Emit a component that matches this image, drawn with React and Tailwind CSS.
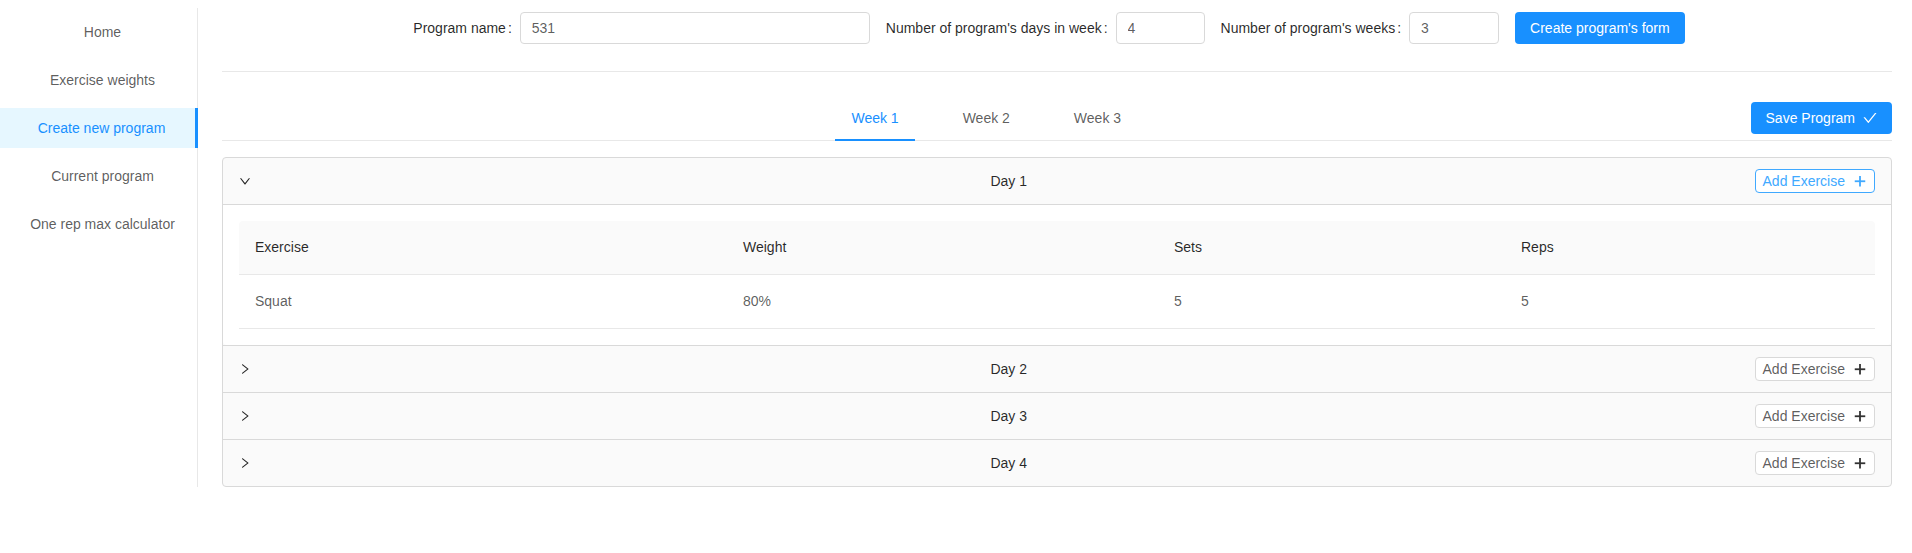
import { useState } from 'react';

const menuItems = ['Home', 'Exercise weights', 'Create new program', 'Current program', 'One rep max calculator'];
const weeks = ['Week 1', 'Week 2', 'Week 3'];
const days = ['Day 1', 'Day 2', 'Day 3', 'Day 4'];

function RightIcon({ className }) {
  return (
    <svg viewBox="64 64 896 896" className={className} fill="currentColor">
      <path d="M765.7 486.8L314.9 134.7A7.97 7.97 0 00302 141v77.3c0 4.9 2.3 9.6 6.1 12.6l360 281.1-360 281.1c-3.9 3-6.1 7.7-6.1 12.6V883c0 6.7 7.7 10.4 12.9 6.3l450.8-352.1a31.96 31.96 0 000-50.4z" />
    </svg>
  );
}

function PlusIcon({ className }) {
  return (
    <svg viewBox="0 0 14 14" className={className} fill="currentColor">
      <rect x="6.1" y="2" width="1.8" height="10.5" />
      <rect x="1.75" y="6.35" width="10.5" height="1.8" />
    </svg>
  );
}

function CheckIcon({ className }) {
  return (
    <svg viewBox="64 64 896 896" className={className} fill="currentColor">
      <path d="M912 190h-69.9c-9.8 0-19.1 4.5-25.1 12.2L404.7 724.5 207 474a32 32 0 00-25.1-12.2H112c-6.7 0-10.4 7.7-6.3 12.9l273.9 347c12.8 16.2 37.4 16.2 50.3 0l488.4-618.9c4.1-5.1.4-12.8-6.3-12.8z" />
    </svg>
  );
}

function FormItem({ label, children }) {
  return (
    <div className="flex items-center mr-4">
      <label className="text-[rgba(0,0,0,0.85)] whitespace-nowrap">
        {label}
        <span className="ml-[2px] mr-2">:</span>
      </label>
      {children}
    </div>
  );
}

function Field({ value, width }) {
  return (
    <input
      defaultValue={value}
      className={`${width} h-8 border border-[#d9d9d9] rounded px-[11px] text-[rgba(0,0,0,0.65)] outline-none bg-white`}
    />
  );
}

export default function App() {
  const [activeWeek, setActiveWeek] = useState(0);
  const [openDay, setOpenDay] = useState(0);

  return (
    <div className="flex pt-2 text-sm leading-[1.5] font-['Liberation_Sans',Arial,sans-serif] bg-white min-h-[553px] items-start">
      {/* sidebar menu */}
      <aside className="w-[198px] shrink-0 border-r border-[#e8e8e8] self-stretch h-[479px]">
        <ul>
          {menuItems.map((item, i) => (
            <li
              key={item}
              className={
                i === 2
                  ? 'h-10 leading-10 mt-1 mb-2 -mr-px pl-6 pr-4 text-center bg-[#e6f7ff] text-[#1890ff] border-r-[3px] border-[#1890ff]'
                  : 'h-10 leading-10 mt-1 mb-2 pl-6 pr-4 text-center text-[rgba(0,0,0,0.65)]'
              }
            >
              {item}
            </li>
          ))}
        </ul>
      </aside>

      <main className="flex-1 min-w-0 pl-6 pr-5">
        {/* program form */}
        <div className="h-10 flex items-center justify-center">
          <FormItem label="Program name">
            <Field value="531" width="w-[350px]" />
          </FormItem>
          <FormItem label="Number of program's days in week">
            <Field value="4" width="w-[89px]" />
          </FormItem>
          <FormItem label="Number of program's weeks">
            <Field value="3" width="w-[90px]" />
          </FormItem>
          <button className="mr-4 h-8 px-[15px] rounded bg-[#1890ff] text-white whitespace-nowrap">
            Create program's form
          </button>
        </div>

        <div className="mt-[23px] mb-6 h-px bg-[#e8e8e8]" />

        {/* week tabs */}
        <div className="flex items-center h-[45px] border-b border-[#e8e8e8]">
          <div className="flex-1 flex justify-center self-stretch gap-8">
            {weeks.map((w, i) => (
              <button
                key={w}
                onClick={() => setActiveWeek(i)}
                className={`relative px-4 ${i === activeWeek ? 'text-[#1890ff]' : 'text-[rgba(0,0,0,0.65)]'}`}
              >
                {w}
                {i === activeWeek && <span className="absolute left-0 right-0 -bottom-px h-[2px] bg-[#1890ff]" />}
              </button>
            ))}
          </div>
          <button className="h-8 px-[15px] rounded bg-[#1890ff] text-white flex items-center gap-2">
            Save Program
            <CheckIcon className="w-[14px] h-[14px]" />
          </button>
        </div>

        {/* days collapse */}
        <div className="mt-4 border border-[#d9d9d9] rounded bg-[#fafafa]">
          {days.map((d, i) => (
            <div key={d} className={i < days.length - 1 ? 'border-b border-[#d9d9d9]' : ''}>
              <div
                className="flex items-center h-[46px] px-4 text-[rgba(0,0,0,0.85)] cursor-pointer"
                onClick={() => setOpenDay(openDay === i ? -1 : i)}
              >
                <RightIcon className={`w-3 h-3 mr-3 ${openDay === i ? 'rotate-90' : ''}`} />
                <span className="flex-1 text-center">{d}</span>
                <button
                  className={
                    i === 0
                      ? 'h-6 px-[7px] rounded border border-[#40a9ff] text-[#40a9ff] bg-white flex items-center gap-2'
                      : 'h-6 px-[7px] rounded border border-[#d9d9d9] text-[rgba(0,0,0,0.65)] bg-white flex items-center gap-2'
                  }
                >
                  Add Exercise
                  <PlusIcon className={`w-[14px] h-[14px] ${i === 0 ? '' : 'text-[#333]'}`} />
                </button>
              </div>
              {openDay === i && (
                <div className="bg-white border-t border-[#d9d9d9] p-4 rounded-b">
                  <table className="w-full table-fixed text-left">
                    <thead>
                      <tr className="bg-[#fafafa] text-[rgba(0,0,0,0.85)]">
                        <th className="w-[488px] p-4 font-normal border-b border-[#e8e8e8] rounded-tl">Exercise</th>
                        <th className="w-[431px] p-4 font-normal border-b border-[#e8e8e8]">Weight</th>
                        <th className="w-[347px] p-4 font-normal border-b border-[#e8e8e8]">Sets</th>
                        <th className="p-4 font-normal border-b border-[#e8e8e8] rounded-tr">Reps</th>
                      </tr>
                    </thead>
                    <tbody className="text-[rgba(0,0,0,0.65)]">
                      {i === 0 && (
                        <tr>
                          <td className="p-4 border-b border-[#e8e8e8]">Squat</td>
                          <td className="p-4 border-b border-[#e8e8e8]">80%</td>
                          <td className="p-4 border-b border-[#e8e8e8]">5</td>
                          <td className="p-4 border-b border-[#e8e8e8]">5</td>
                        </tr>
                      )}
                    </tbody>
                  </table>
                </div>
              )}
            </div>
          ))}
        </div>
      </main>
    </div>
  );
}
